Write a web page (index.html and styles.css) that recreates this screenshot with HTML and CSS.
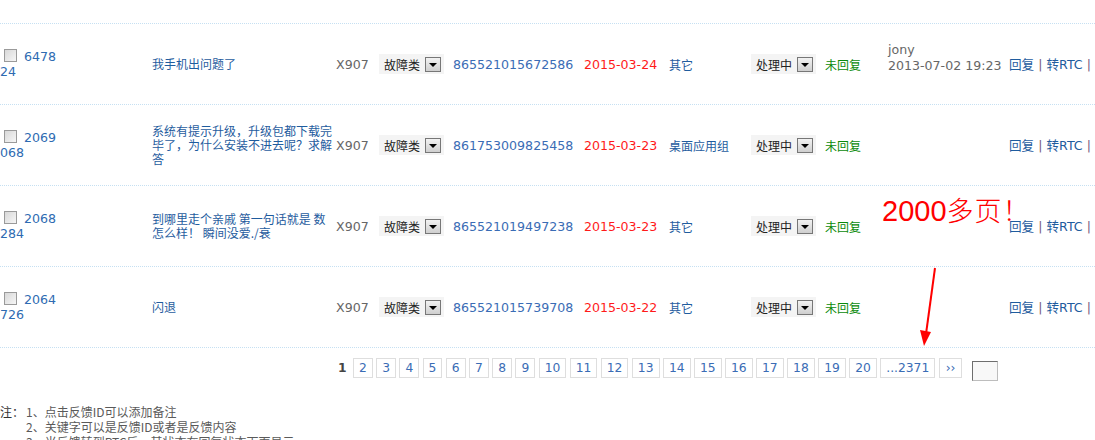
FILE: index.html
```html
<!DOCTYPE html>
<html lang="zh-CN">
<head>
<meta charset="utf-8">
<title>反馈列表</title>
<link rel="stylesheet" href="styles.css">
</head>
<body>
<div class="list">
  <div class="top-row"></div>

  <div class="row">
    <div class="c-id"><input type="checkbox" class="chk"><a class="num">6478<br>24</a></div>
    <div class="c-title"><a>我手机出问题了</a></div>
    <div class="c-model">X907</div>
    <div class="c-sel"><div class="sel"><span>故障类</span><i class="btn"></i></div></div>
    <div class="c-imei">865521015672586</div>
    <div class="c-date">2015-03-24</div>
    <div class="c-cat"><a>其它</a></div>
    <div class="c-sel"><div class="sel"><span>处理中</span><i class="btn"></i></div></div>
    <div class="c-reply">未回复</div>
    <div class="c-user">jony<br>2013-07-02 19:23</div>
    <div class="c-act"><a>回复</a> <span class="bar">|</span> <a>转RTC</a> <span class="bar">|</span></div>
  </div>

  <div class="row">
    <div class="c-id"><input type="checkbox" class="chk"><a class="num">2069<br>068</a></div>
    <div class="c-title"><a>系统有提示升级，升级包都下载完毕了，为什么安装不进去呢？求解答</a></div>
    <div class="c-model">X907</div>
    <div class="c-sel"><div class="sel"><span>故障类</span><i class="btn"></i></div></div>
    <div class="c-imei">861753009825458</div>
    <div class="c-date">2015-03-23</div>
    <div class="c-cat"><a>桌面应用组</a></div>
    <div class="c-sel"><div class="sel"><span>处理中</span><i class="btn"></i></div></div>
    <div class="c-reply">未回复</div>
    <div class="c-user"></div>
    <div class="c-act"><a>回复</a> <span class="bar">|</span> <a>转RTC</a> <span class="bar">|</span></div>
  </div>

  <div class="row">
    <div class="c-id"><input type="checkbox" class="chk"><a class="num">2068<br>284</a></div>
    <div class="c-title"><a>到哪里走个亲戚 第一句话就是 数怎么样！ 瞬间没爱./衰</a></div>
    <div class="c-model">X907</div>
    <div class="c-sel"><div class="sel"><span>故障类</span><i class="btn"></i></div></div>
    <div class="c-imei">865521019497238</div>
    <div class="c-date">2015-03-23</div>
    <div class="c-cat"><a>其它</a></div>
    <div class="c-sel"><div class="sel"><span>处理中</span><i class="btn"></i></div></div>
    <div class="c-reply">未回复</div>
    <div class="c-user"></div>
    <div class="c-act"><a>回复</a> <span class="bar">|</span> <a>转RTC</a> <span class="bar">|</span></div>
  </div>

  <div class="row">
    <div class="c-id"><input type="checkbox" class="chk"><a class="num">2064<br>726</a></div>
    <div class="c-title"><a>闪退</a></div>
    <div class="c-model">X907</div>
    <div class="c-sel"><div class="sel"><span>故障类</span><i class="btn"></i></div></div>
    <div class="c-imei">865521015739708</div>
    <div class="c-date">2015-03-22</div>
    <div class="c-cat"><a>其它</a></div>
    <div class="c-sel"><div class="sel"><span>处理中</span><i class="btn"></i></div></div>
    <div class="c-reply">未回复</div>
    <div class="c-user"></div>
    <div class="c-act"><a>回复</a> <span class="bar">|</span> <a>转RTC</a> <span class="bar">|</span></div>
  </div>
</div>

<div class="pager">
  <span class="cur">1</span>
  <a class="pg">2</a><a class="pg">3</a><a class="pg">4</a><a class="pg">5</a><a class="pg">6</a><a class="pg">7</a><a class="pg">8</a><a class="pg">9</a><a class="pg">10</a><a class="pg">11</a><a class="pg">12</a><a class="pg">13</a><a class="pg">14</a><a class="pg">15</a><a class="pg">16</a><a class="pg">17</a><a class="pg">18</a><a class="pg">19</a><a class="pg">20</a><a class="pg">...2371</a><a class="pg nx">››</a>
  <span class="goto"></span>
</div>

<div class="notes">
  <div class="note-label">注：</div>
  <div class="note-items">
    <div>1、点击反馈ID可以添加备注</div>
    <div>2、关键字可以是反馈ID或者是反馈内容</div>
    <div>3、当反馈转到RTC后，其状态在回复状态下面显示</div>
  </div>
</div>

<div class="annot">2000<span class="cjk">多页！</span></div>
<svg class="arrow" width="30" height="90" viewBox="0 0 30 90">
  <line x1="20" y1="2" x2="11" y2="68" stroke="#ff0000" stroke-width="2"/>
  <polygon points="5,64 16,66 9,80" fill="#ff0000"/>
</svg>
</body>
</html>
```

FILE: styles.css
```css
html, body {
  margin: 0;
  padding: 0;
  background: #fff;
}
body {
  width: 1095px;
  height: 440px;
  overflow: hidden;
  position: relative;
  font-family: "DejaVu Sans", "Noto Sans CJK SC", sans-serif;
  font-size: 12px;
  line-height: 15px;
  color: #555;
}
a {
  color: #1f5c9e;
  text-decoration: none;
}
.top-row {
  height: 23px;
  border-bottom: 1px dotted #c6e0f2;
}
.row {
  display: grid;
  grid-template-columns: 152px 184px 43px 74px 131px 85px 82px 74px 63px 121px 1fr;
  align-items: center;
  height: 80px;
  border-bottom: 1px dotted #c6e0f2;
}
.c-id {
  font-size: 12.6px;
  line-height: 15px;
}
.c-id .num {
  color: #2e6bb2;
}
.chk {
  appearance: none;
  -webkit-appearance: none;
  width: 13px;
  height: 13px;
  margin: 0 7px 0 4px;
  border: 1px solid #9a9a9a;
  background: linear-gradient(135deg, #d8d8d8, #f6f6f6);
  vertical-align: -1px;
  box-sizing: border-box;
}
.c-title {
  width: 180px;
  font-family: "Noto Sans CJK SC", sans-serif;
  line-height: 14px;
}
.c-model {
  color: #666;
  font-size: 12.6px;
}
.sel {
  display: flex;
  align-items: center;
  justify-content: space-between;
  width: 65px;
  height: 20px;
  box-sizing: border-box;
  padding: 0 3px 0 5px;
  background: #f4f4f4;
  color: #222;
  font-family: "Noto Sans CJK SC", sans-serif;
}
.btn {
  position: relative;
  width: 16px;
  height: 15px;
  box-sizing: border-box;
  border: 1px solid #777;
  background: linear-gradient(#f2f2f2, #cfcfcf);
}
.btn::after {
  content: "";
  position: absolute;
  left: 3px;
  top: 5px;
  border-left: 4px solid transparent;
  border-right: 4px solid transparent;
  border-top: 4px solid #000;
}
.c-imei {
  color: #3a6cb5;
  font-size: 12.6px;
}
.c-date {
  color: #ff1a1a;
  font-size: 12.6px;
}
.c-cat {
  font-family: "Noto Sans CJK SC", sans-serif;
}
.c-reply {
  color: #0a8a0a;
  font-family: "Noto Sans CJK SC", sans-serif;
}
.c-user {
  color: #666;
  font-size: 12.6px;
  line-height: 16px;
  padding-bottom: 12px;
}
.c-act {
  font-size: 12.6px;
  white-space: nowrap;
}
.c-act .bar {
  color: #7a5a80;
}
.pager {
  display: flex;
  align-items: flex-start;
  gap: 3.4px;
  padding-left: 338px;
  margin-top: 10px;
  height: 23px;
  font-size: 12.3px;
}
.cur {
  font-weight: bold;
  color: #444;
  line-height: 20px;
  margin-right: 3px;
}
.pg {
  display: block;
  height: 20px;
  line-height: 18px;
  padding: 0 5px;
  box-sizing: border-box;
  border: 1px solid #dedede;
  color: #3a6cb5;
}
.pg.nx {
  padding: 0 6px;
}
.goto {
  display: block;
  width: 26px;
  height: 20px;
  margin: 3px 0 0 6px;
  box-sizing: border-box;
  border: 1px solid #bdbdbd;
  border-top-color: #6e6e6e;
  border-left-color: #6e6e6e;
  background: #f8f8f8;
}
.notes {
  display: flex;
  margin-top: 23px;
  font-family: "Noto Sans CJK SC", sans-serif;
  font-size: 12px;
  line-height: 15px;
  color: #5a5a5a;
}
.note-label {
  width: 26px;
  color: #333;
}
.annot {
  position: absolute;
  left: 882px;
  top: 193px;
  color: #ff0000;
  font-family: "Liberation Sans", sans-serif;
  font-size: 29px;
  line-height: 34px;
  white-space: nowrap;
}
.annot .cjk {
  font-family: "Noto Sans CJK SC", sans-serif;
  font-size: 27px;
  font-weight: 300;
  letter-spacing: 1px;
}
.arrow {
  position: absolute;
  left: 915px;
  top: 266px;
}
```
